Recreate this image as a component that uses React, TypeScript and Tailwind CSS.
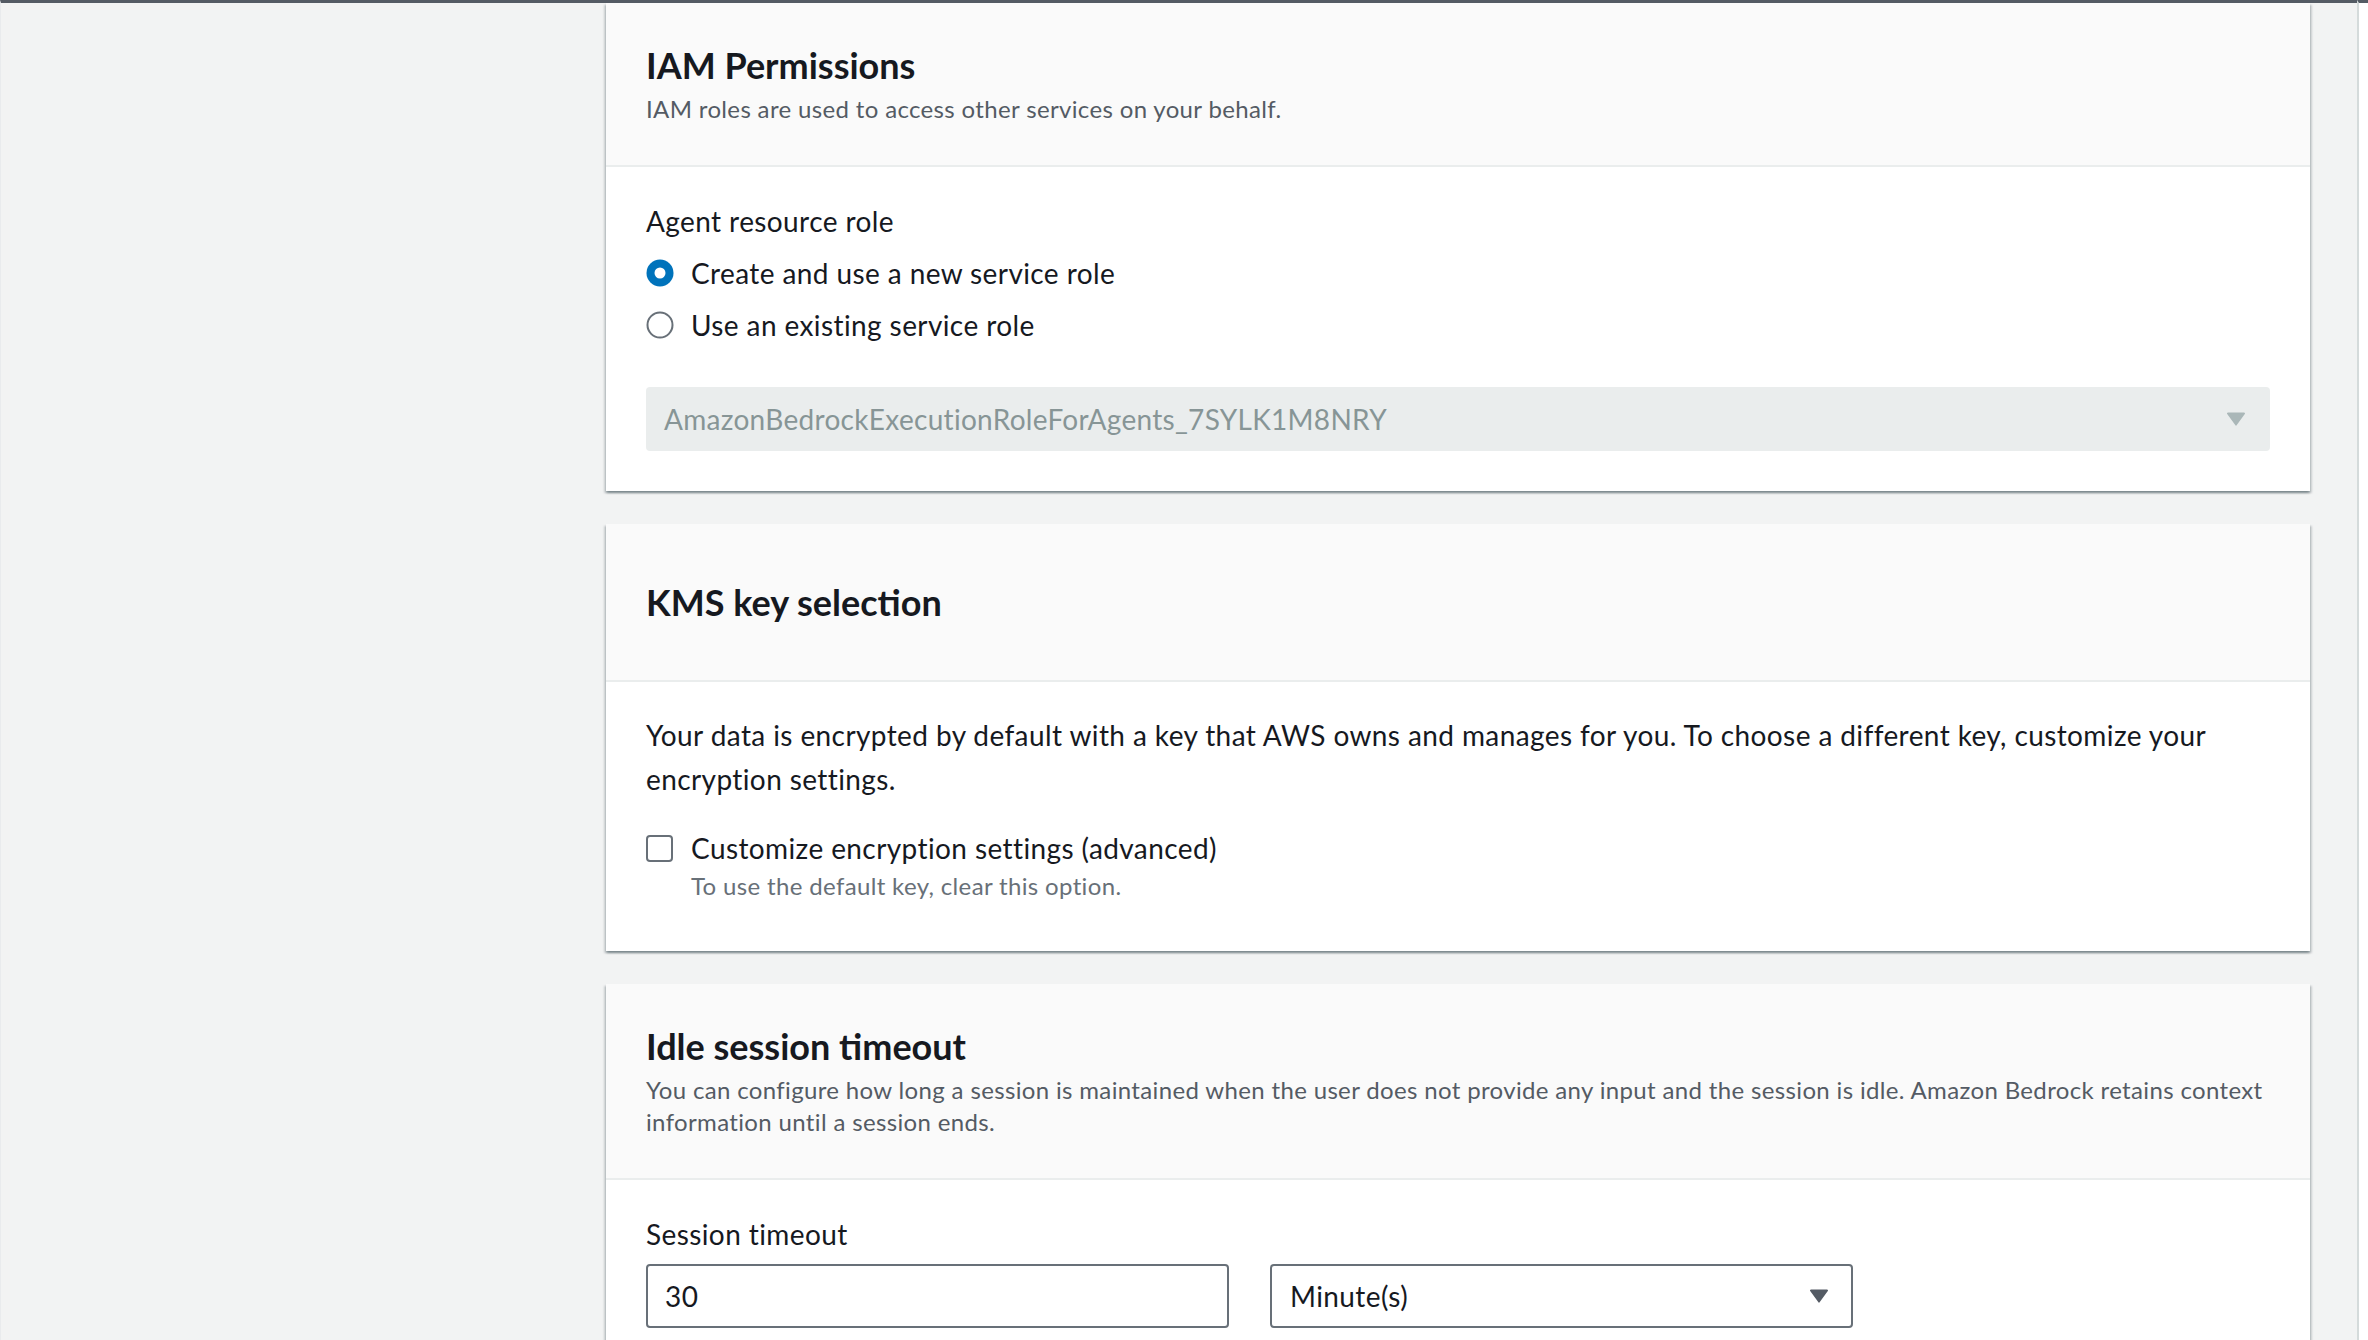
import type { ReactNode } from "react";

const FONT = { fontFamily: "Lato, 'Liberation Sans', sans-serif" };

function Caret({ color }: { color: string }) {
  return (
    <svg width="20" height="16" viewBox="0 0 20 16" className="shrink-0">
      <path
        d="M2 1.5h16a1 1 0 0 1 .8 1.6l-8 11a1 1 0 0 1-1.6 0l-8-11A1 1 0 0 1 2 1.5z"
        fill={color}
      />
    </svg>
  );
}

function Radio({ checked }: { checked?: boolean }) {
  return (
    <svg width="28" height="28" viewBox="0 0 28 28" className="shrink-0">
      {checked ? (
        <>
          <circle cx="14" cy="14" r="13.5" fill="#0073bb" />
          <circle cx="14" cy="14" r="5.5" fill="#ffffff" />
        </>
      ) : (
        <circle cx="14" cy="14" r="12.5" fill="#ffffff" stroke="#687078" strokeWidth="2" />
      )}
    </svg>
  );
}

function Container({
  title,
  description,
  headerClass = "py-[40px]",
  bodyClass = "pt-[32px] pb-[40px]",
  children,
}: {
  title: string;
  description?: ReactNode;
  headerClass?: string;
  bodyClass?: string;
  children: ReactNode;
}) {
  return (
    <section className="bg-white shadow-[0_2px_2px_0_rgba(0,28,36,0.3),2px_2px_2px_0_rgba(0,28,36,0.15),-2px_2px_2px_0_rgba(0,28,36,0.15)]">
      <div className={`border-b-2 border-[#eaeded] bg-[#fafafa] px-[40px] ${headerClass}`}>
        <h2 className="text-[36px] font-bold leading-[44px] tracking-normal text-[#16191f]">{title}</h2>
        {description && (
          <p className="mt-[6px] text-[24px] leading-[32px] tracking-[0.35px] text-[#545b64]">{description}</p>
        )}
      </div>
      <div className={`px-[40px] ${bodyClass}`}>{children}</div>
    </section>
  );
}

export default function App() {
  return (
    <div
      style={FONT}
      className="flex h-[1340px] w-full overflow-hidden bg-[#f2f3f3] tracking-[0.4px] text-[#16191f]"
    >
      <main className="flex-1 border-t-[3px] border-l border-[#545b64] border-l-[#e9ebed] pl-[605px] pr-[47px]">
        <div className="flex flex-col gap-[33px]">
          <Container title="IAM Permissions" description="IAM roles are used to access other services on your behalf.">
            <div className="flex flex-col gap-[8px] text-[28px] leading-[44px]">
              <div>Agent resource role</div>
              <label className="flex items-center gap-[17px]">
                <Radio checked />
                <span>Create and use a new service role</span>
              </label>
              <label className="flex items-center gap-[17px]">
                <Radio />
                <span>Use an existing service role</span>
              </label>
            </div>
            <div className="mt-[40px] flex h-[64px] items-center justify-between rounded-[4px] bg-[#eaeded] pl-[18px] pr-[24px] text-[28px] tracking-[0.3px] text-[#879596]">
              <span>AmazonBedrockExecutionRoleForAgents_7SYLK1M8NRY</span>
              <Caret color="#aab7b8" />
            </div>
          </Container>

          <Container title="KMS key selection" headerClass="py-[56px]" bodyClass="pt-[31px] pb-[49px]">
            <p className="text-[28px] leading-[44px]">
              Your data is encrypted by default with a key that AWS owns and manages for you. To choose a different
              key, customize your encryption settings.
            </p>
            <div className="mt-[25px] flex gap-[18px]">
              <div className="flex h-[44px] items-center">
                <span className="h-[27px] w-[27px] rounded-[4px] border-2 border-[#687078] bg-white" />
              </div>
              <div>
                <div className="text-[28px] leading-[44px]">Customize encryption settings (advanced)</div>
                <div className="text-[24px] leading-[32px] tracking-[0.35px] text-[#687078]">
                  To use the default key, clear this option.
                </div>
              </div>
            </div>
          </Container>

          <Container
            title="Idle session timeout"
            description="You can configure how long a session is maintained when the user does not provide any input and the session is idle. Amazon Bedrock retains context information until a session ends."
          >
            <div className="text-[28px] leading-[44px]">Session timeout</div>
            <div className="mt-[8px] flex gap-[41px] text-[28px]">
              <div className="flex h-[64px] w-[583px] items-center rounded-[4px] border-2 border-[#687078] px-[17px]">
                30
              </div>
              <div className="flex h-[64px] w-[583px] items-center justify-between rounded-[4px] border-2 border-[#687078] pl-[18px] pr-[22px]">
                <span>Minute(s)</span>
                <Caret color="#545b64" />
              </div>
            </div>
          </Container>
        </div>
      </main>
      <div className="w-[11px] shrink-0 border-t-[3px] border-l-2 border-[#545b64] border-l-[#d5dbdb] bg-white" />
    </div>
  );
}
